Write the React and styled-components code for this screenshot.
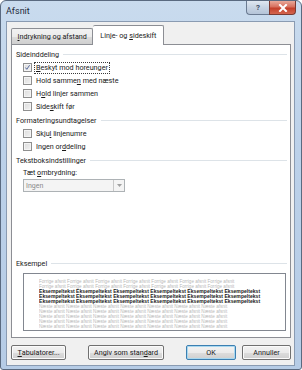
import React from "react";
import styled, { createGlobalStyle, css } from "styled-components";

const GlobalStyle = createGlobalStyle`
  html, body {
    margin: 0;
    padding: 0;
    background: #ffffff;
  }
  body {
    font-family: Roboto, "Noto Sans", sans-serif;
  }
`;

const sections = [
  {
    title: "Sideinddeling",
    items: [
      { pre: "", key: "B", post: "eskyt mod horeunger", checked: true, focus: true },
      { pre: "Hold samme", key: "n", post: " med næste" },
      { pre: "H", key: "o", post: "ld linjer sammen" },
      { pre: "Side", key: "s", post: "kift før" },
    ],
  },
  {
    title: "Formateringsundtagelser",
    items: [
      { pre: "Skju", key: "l", post: " linjenumre" },
      { pre: "Ingen or", key: "d", post: "deling" },
    ],
  },
];

const previewRows = [
  { kind: "prev", text: "Forrige afsnit " },
  { kind: "prev", text: "Forrige afsnit " },
  { kind: "main", text: "Eksempeltekst " },
  { kind: "main", text: "Eksempeltekst " },
  { kind: "main", text: "Eksempeltekst " },
  { kind: "next", text: "Næste afsnit " },
  { kind: "next", text: "Næste afsnit " },
  { kind: "next", text: "Næste afsnit " },
  { kind: "next", text: "Næste afsnit " },
  { kind: "next", text: "Næste afsnit " },
];

function Check({ checked }) {
  return (
    <Box>
      {checked && (
        <svg width="9" height="9" viewBox="0 0 9 9">
          <path d="M1.8 4.6 L3.6 6.8 L7.2 1.6" fill="none" stroke="#4a5f97" strokeWidth="1.2" />
        </svg>
      )}
    </Box>
  );
}

function Section({ title, children }) {
  return (
    <Group>
      <Heading>
        <span>{title}</span>
        <Rule />
      </Heading>
      {children}
    </Group>
  );
}

export default function App() {
  return (
    <>
      <GlobalStyle />
      <Window>
        <TitleBar>
          <Title>Afsnit</Title>
          <Controls>
            <HelpButton>?</HelpButton>
            <CloseButton>
              <svg width="10" height="8" viewBox="0 0 10 8">
                <path d="M2 1 L8 7 M8 1 L2 7" stroke="#ffffff" strokeWidth="2" strokeLinecap="square" />
              </svg>
            </CloseButton>
          </Controls>
        </TitleBar>
        <Client>
          <TabStrip>
            <Tab>
              <u>I</u>ndrykning og afstand
            </Tab>
            <Tab $active>
              Linje- og <u>s</u>ideskift
            </Tab>
          </TabStrip>
          <Panel>
            {sections.map((s) => (
              <Section key={s.title} title={s.title}>
                {s.items.map((it) => (
                  <CheckRow key={it.pre + it.post}>
                    <Check checked={it.checked} />
                    <CheckLabel $focus={it.focus}>
                      {it.pre}
                      <u>{it.key}</u>
                      {it.post}
                    </CheckLabel>
                  </CheckRow>
                ))}
              </Section>
            ))}
            <Section title="Tekstboksindstillinger">
              <FieldLabel>
                Tæt <u>o</u>mbrydning:
              </FieldLabel>
              <Select>
                <span>Ingen</span>
                <SelectArrow>
                  <svg width="5" height="3" viewBox="0 0 5 3">
                    <path d="M0 0 H5 L2.5 3 Z" fill="#a0a0a0" />
                  </svg>
                </SelectArrow>
              </Select>
            </Section>
            <Spacer />
            <Section title="Eksempel">
              <Preview>
                {previewRows.map((r, i) => (
                  <PreviewLine key={i} $kind={r.kind}>
                    {r.text.repeat(r.kind === "main" ? 6 : 7)}
                  </PreviewLine>
                ))}
              </Preview>
            </Section>
          </Panel>
          <ButtonRow>
            <Button $w={56}>
              <u>T</u>abulatorer...
            </Button>
            <Button $w={77}>
              Angiv som stan<u>d</u>ard
            </Button>
            <RightButtons>
              <Button $w={50} $default>
                OK
              </Button>
              <Button $w={49}>Annuller</Button>
            </RightButtons>
          </ButtonRow>
        </Client>
      </Window>
    </>
  );
}

const Window = styled.div`
  width: 302px;
  height: 370px;
  box-sizing: border-box;
  border: 1px solid #5a6a80;
  border-radius: 6px 6px 3px 3px;
  background: linear-gradient(180deg, #c9dbee 0%, #bcd1e9 40%, #b6cce6 100%);
  display: flex;
  flex-direction: column;
  overflow: hidden;
`;

const TitleBar = styled.div`
  height: 20px;
  display: flex;
  align-items: flex-start;
  justify-content: space-between;
  padding-left: 5px;
  padding-right: 5px;
`;

const Title = styled.div`
  font-size: 9px;
  color: #1e2a3a;
  line-height: 20px;
`;

const Controls = styled.div`
  display: flex;
`;

const capButton = css`
  height: 14px;
  display: flex;
  align-items: center;
  justify-content: center;
  border: 1px solid #6a7a91;
  border-top: none;
  box-sizing: border-box;
`;

const HelpButton = styled.div`
  ${capButton}
  width: 23px;
  border-radius: 0 0 0 4px;
  border-right: none;
  background: linear-gradient(180deg, #dfe7f1 0%, #c6d3e3 50%, #b5c4d8 100%);
  color: #3e4e66;
  font-size: 8px;
  font-weight: bold;
`;

const CloseButton = styled.div`
  ${capButton}
  width: 27px;
  border-radius: 0 0 4px 0;
  border-color: #7a3a32;
  background: linear-gradient(180deg, #e9a99a 0%, #d7705e 45%, #c4402b 55%, #d3654f 100%);
`;

const Client = styled.div`
  flex: 1;
  margin: 0 6px 5px 5px;
  background: #f0f0f0;
  border: 1px solid #8a9bb2;
  padding: 3px 3px 5px 4px;
  display: flex;
  flex-direction: column;
`;

const TabStrip = styled.div`
  display: flex;
  align-items: flex-end;
  height: 19px;
  position: relative;
  z-index: 1;
`;

const Tab = styled.div`
  font-size: 7.2px;
  color: #1a1a1a;
  box-sizing: border-box;
  border: 1px solid #8c8e94;
  border-bottom: none;
  border-radius: 2px 2px 0 0;
  padding: 0 5.5px;
  white-space: nowrap;
  height: 16px;
  line-height: 15px;
  background: linear-gradient(180deg, #f2f2f2 0%, #ebebeb 50%, #dcdcdc 51%, #cfcfcf 100%);
  ${(p) =>
    p.$active &&
    css`
      height: 20px;
      line-height: 19px;
      background: #ffffff;
      border-left: none;
      margin-bottom: -1px;
      padding: 0 7px;
    `}
`;

const Panel = styled.div`
  height: 294px;
  box-sizing: border-box;
  background: #ffffff;
  border: 1px solid #8c8e94;
  padding: 2px 4px 6px 4px;
  display: flex;
  flex-direction: column;
`;

const Group = styled.div`
  display: flex;
  flex-direction: column;
`;

const Heading = styled.div`
  display: flex;
  align-items: center;
  gap: 4px;
  font-size: 7.2px;
  color: #1a1a1a;
  height: 14px;
  white-space: nowrap;
`;

const Rule = styled.div`
  flex: 1;
  height: 1px;
  background: #dde3e8;
  margin-right: -1px;
`;

const CheckRow = styled.div`
  display: flex;
  align-items: center;
  height: 13px;
  padding-left: 7px;
  gap: 2px;
`;

const Box = styled.div`
  width: 9px;
  height: 9px;
  box-sizing: border-box;
  border: 1px solid #8f8f8f;
  background: linear-gradient(135deg, #dcdcdc 0%, #f2f2f2 100%);
  box-shadow: inset 0 0 0 1px #f4f4f4;
  display: flex;
  align-items: center;
  justify-content: center;
`;

const CheckLabel = styled.span`
  font-size: 7.2px;
  color: #1a1a1a;
  padding: 0 1px;
  line-height: 10px;
  border: 1px dotted ${(p) => (p.$focus ? "#3a3a3a" : "transparent")};
`;

const FieldLabel = styled.div`
  font-size: 7.2px;
  color: #1a1a1a;
  padding-left: 7px;
  height: 12px;
  line-height: 12px;
`;

const Select = styled.div`
  margin-left: 7px;
  width: 102px;
  height: 13px;
  box-sizing: border-box;
  border: 1px solid #adb2b5;
  background: #f4f4f4;
  display: flex;
  align-items: center;
  justify-content: space-between;
  font-size: 7px;
  color: #8a8a8a;
  padding-left: 2px;
`;

const SelectArrow = styled.div`
  width: 11px;
  height: 11px;
  box-sizing: border-box;
  border-left: 1px solid #c8c8c8;
  display: flex;
  align-items: center;
  justify-content: center;
`;

const Spacer = styled.div`
  flex: 1;
`;

const Preview = styled.div`
  margin: 3px 0 0 7px;
  height: 58px;
  box-sizing: border-box;
  border: 1px solid #828790;
  background: #ffffff;
  padding: 5px 0 0 15px;
  overflow: hidden;
`;

const PreviewLine = styled.div`
  font-family: "Liberation Sans", sans-serif;
  font-size: ${(p) => (p.$kind === "main" ? "5.1px" : "4.6px")};
  line-height: 5px;
  height: 5px;
  white-space: nowrap;
  overflow: hidden;
  width: 222px;
  color: ${(p) => (p.$kind === "main" ? "#202020" : "#b8b8b8")};
  font-weight: ${(p) => (p.$kind === "main" ? "bold" : "normal")};
`;

const ButtonRow = styled.div`
  display: flex;
  align-items: center;
  gap: 22px;
  margin-top: 7px;
`;

const RightButtons = styled.div`
  margin-left: auto;
  display: flex;
  gap: 6px;
`;

const Button = styled.div`
  width: ${(p) => p.$w}px;
  height: 15px;
  box-sizing: border-box;
  border: 1px solid ${(p) => (p.$default ? "#3c7fb1" : "#707070")};
  border-radius: 2px;
  background: linear-gradient(180deg, #f2f2f2 0%, #ebebeb 50%, #dddddd 51%, #cfcfcf 100%);
  box-shadow: inset 0 0 0 1px ${(p) => (p.$default ? "#a8d8f0" : "#fbfbfb")};
  font-size: 7.2px;
  color: #1a1a1a;
  display: flex;
  align-items: center;
  justify-content: center;
  white-space: nowrap;
`;
